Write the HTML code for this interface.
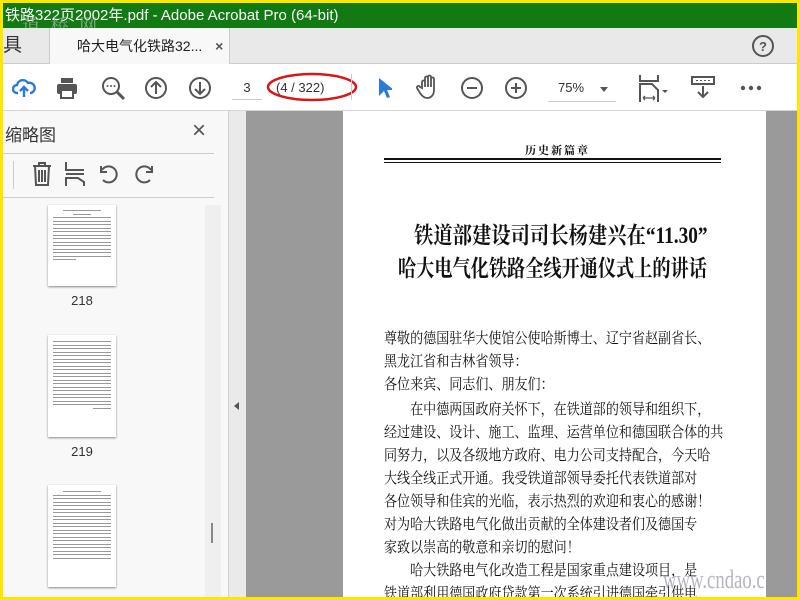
<!DOCTYPE html>
<html><head><meta charset="utf-8"><style>
*{margin:0;padding:0;box-sizing:border-box}
body{width:800px;height:600px;overflow:hidden;background:#ffe600;position:relative;font-family:"Liberation Sans","Noto Sans CJK SC",sans-serif}
.a{position:absolute}
.title{left:3px;top:3px;width:794px;height:25px;background:#117a12;color:#fff;font-size:15px;line-height:25px;padding-left:2px}
.tabs{left:3px;top:28px;width:794px;height:36px;background:#e9e9e9;border-bottom:1px solid #ccc}
.tb{left:3px;top:64px;width:794px;height:47px;background:#fff;border-bottom:1px solid #d5d5d5}
.panel{left:3px;top:111px;width:225px;height:486px;background:#f8f8f8}
.strip{left:228px;top:111px;width:18px;height:486px;background:#eaeaea;border-left:1px solid #d0d0d0}
.gray{left:246px;top:111px;width:551px;height:486px;background:#9a9a9a}
.page{left:343px;top:111px;width:423px;height:486px;background:#fff;font-family:"Liberation Serif","Noto Serif CJK SC",serif;color:#111;overflow:hidden}
.ic{stroke:#555;fill:none;stroke-width:2}
.body{transform:scaleX(0.87);transform-origin:0 0}
.body p{font-size:15px;line-height:23px;white-space:nowrap}
.thumb{background:#fff;box-shadow:0 1px 2px #888;width:68px}
.thumb i{display:block;height:1px;background:#999;margin:2.5px 5px}
</style></head><body>
<div class="a title">铁路322页2002年.pdf - Adobe Acrobat Pro (64-bit)</div>
<div class="a" style="left:22px;top:12px;color:#9fb7a0;font-size:18px;letter-spacing:3px;opacity:.8;font-family:'Noto Serif CJK SC',serif">道 桥 网</div>
<div class="a tabs">
 <div class="a" style="left:0;top:0;width:45px;height:36px;font-size:19px;line-height:36px;color:#333">具</div>
 <div class="a" style="left:46px;top:0;width:181px;height:36px;background:#f8f8f8;border-left:1px solid #ccc;border-right:1px solid #ccc;font-size:14px;line-height:36px;padding-left:27px;color:#222">哈大电气化铁路32... <span style="margin-left:9px;font-weight:bold;color:#555">×</span></div>
 <svg class="a" style="left:748px;top:6px" width="24" height="24"><circle cx="12" cy="12" r="10" class="ic"/><text x="12" y="17" text-anchor="middle" font-size="13" font-weight="bold" fill="#555" font-family="Liberation Sans">?</text></svg>
</div>
<div class="a tb">
 <svg class="a" style="left:9px;top:12px" width="24" height="24"><path d="M6 17h-1a4 4 0 0 1 0-8a6 6 0 0 1 11-2a5 5 0 0 1 3 10h-1M12 21v-9M8 15l4-4 4 4" stroke="#2a7ad8" stroke-width="2.4" fill="none"/></svg>
 <svg class="a" style="left:52px;top:12px" width="24" height="24"><rect x="6" y="2" width="12" height="5" fill="#555"/><rect x="2" y="8" width="20" height="10" rx="2" fill="#555"/><rect x="6" y="14" width="12" height="8" fill="#fff" stroke="#555" stroke-width="2"/></svg>
 <svg class="a" style="left:98px;top:12px" width="26" height="26"><circle cx="10" cy="10" r="8" class="ic"/><path d="M16 16l7 7" stroke="#555" stroke-width="3"/><circle cx="6.5" cy="10" r="1" fill="#555"/><circle cx="10" cy="10" r="1" fill="#555"/><circle cx="13.5" cy="10" r="1" fill="#555"/></svg>
 <svg class="a" style="left:141px;top:12px" width="24" height="24"><circle cx="12" cy="12" r="10" class="ic"/><path d="M12 18V7M7 11l5-5 5 5" class="ic"/></svg>
 <svg class="a" style="left:185px;top:12px" width="24" height="24"><circle cx="12" cy="12" r="10" class="ic"/><path d="M12 6v11M7 13l5 5 5-5" class="ic"/></svg>
 <div class="a" style="left:229px;top:16px;width:30px;height:20px;border-bottom:1px solid #ccc;text-align:center;font-size:13px;color:#333">3</div>
 <div class="a" style="left:273px;top:16px;font-size:13px;color:#333">(4 / 322)</div>
 <svg class="a" style="left:262px;top:6px" width="96" height="34"><ellipse cx="47" cy="17" rx="44" ry="13" fill="none" stroke="#d81818" stroke-width="2.5"/></svg>
 <div class="a" style="left:348px;top:10px;width:1px;height:26px;background:#ccc"></div>
 <svg class="a" style="left:373px;top:12px" width="16" height="24"><path d="M3 2v18l5-5 3 7 3-1-3-7h7z" fill="#2a7ad8"/></svg>
 <svg class="a" style="left:413px;top:10px" width="26" height="28"><path d="M6 14V8a1.5 1.5 0 0 1 3 0v5V4a1.5 1.5 0 0 1 3 0v9V3a1.5 1.5 0 0 1 3 0v10V5a1.5 1.5 0 0 1 3 0v11c0 5-3 8-7 8c-3 0-5-2-7-5l-3-5a1.5 1.5 0 0 1 3-1z" stroke="#555" stroke-width="1.8" fill="none"/></svg>
 <svg class="a" style="left:457px;top:12px" width="24" height="24"><circle cx="12" cy="12" r="10" class="ic"/><path d="M7 12h10" class="ic"/></svg>
 <svg class="a" style="left:501px;top:12px" width="24" height="24"><circle cx="12" cy="12" r="10" class="ic"/><path d="M7 12h10M12 7v10" class="ic"/></svg>
 <div class="a" style="left:545px;top:16px;width:68px;height:22px;border-bottom:1px solid #ccc;font-size:13px;color:#333;padding-left:10px">75%</div>
 <div class="a" style="left:597px;top:23px;border:4px solid transparent;border-top:5px solid #555"></div>
 <svg class="a" style="left:635px;top:10px" width="34" height="30"><path d="M2 1v6h18V1" class="ic"/><path d="M2 28V10h12l6 6v12" class="ic"/><path d="M5 24h12M5 24l2-2M5 24l2 2M17 24l-2-2M17 24l-2 2" stroke="#555" stroke-width="1.3" fill="none"/><path d="M24 16l3 3 3-3z" fill="#555"/></svg>
 <svg class="a" style="left:688px;top:11px" width="24" height="26"><rect x="1" y="2" width="22" height="7" class="ic"/><path d="M5 5.5h2M9 5.5h2M13 5.5h2M17 5.5h2" stroke="#555"/><path d="M12 11v11M7 17l5 5 5-5" class="ic"/></svg>
 <svg class="a" style="left:736px;top:20px" width="24" height="8"><circle cx="4" cy="4" r="2.2" fill="#555"/><circle cx="12" cy="4" r="2.2" fill="#555"/><circle cx="20" cy="4" r="2.2" fill="#555"/></svg>
</div>
<div class="a panel">
 <div class="a" style="left:2px;top:10px;font-size:17px;color:#333">缩略图</div>
 <div class="a" style="left:189px;top:6px;font-size:24px;color:#555">×</div>
 <div class="a" style="left:0;top:42px;width:211px;height:1px;background:#ccc"></div>
 <div class="a" style="left:10px;top:50px;width:1px;height:28px;background:#ccc"></div>
 <svg class="a" style="left:28px;top:50px" width="22" height="26"><path d="M2 5h18M8 5V2h6v3M4 5l1 19h12l1-19M8 9v12M11 9v12M14 9v12" class="ic"/></svg>
 <svg class="a" style="left:61px;top:50px" width="22" height="26"><path d="M2 1v8h18M2 25v-8h12l6 4v4M2 13h18" stroke="#555" stroke-width="2" fill="none"/></svg>
 <svg class="a" style="left:94px;top:51px" width="24" height="24"><path d="M6 18a8 8 0 1 0 -1-10M4 4v6h6" class="ic" stroke-width="2.5"/></svg>
 <svg class="a" style="left:129px;top:51px" width="24" height="24"><path d="M18 18a8 8 0 1 1 1-10M20 4v6h-6" class="ic" stroke-width="2.5"/></svg>
 <div class="a" style="left:0;top:86px;width:211px;height:1px;background:#ccc"></div>
 <div class="a" style="left:202px;top:94px;width:16px;height:392px;background:#efefef"></div>
 <div class="a" style="left:208px;top:412px;width:2px;height:20px;background:#888"></div>
 <div class="a thumb" style="left:45px;top:94px;height:81px"><i style="margin-top:5px;margin-left:15px;margin-right:15px"></i><i style="margin-left:25px;margin-right:25px"></i><i></i><i></i><i></i><i></i><i></i><i></i><i></i><i></i><i></i><i></i><i></i><i></i><i style="margin-right:40px"></i></div>
 <div class="a" style="left:45px;top:182px;width:68px;text-align:center;font-size:13px;color:#333">218</div>
 <div class="a thumb" style="left:45px;top:224px;height:102px"><i style="margin-top:6px"></i><i></i><i></i><i></i><i></i><i></i><i></i><i></i><i></i><i></i><i></i><i></i><i></i><i></i><i></i><i></i><i></i><i></i><i></i><i style="margin-left:45px"></i></div>
 <div class="a" style="left:45px;top:333px;width:68px;text-align:center;font-size:13px;color:#333">219</div>
 <div class="a thumb" style="left:45px;top:374px;height:102px"><i style="margin-top:6px;margin-left:15px;margin-right:15px"></i><i></i><i></i><i></i><i></i><i></i><i></i><i></i><i></i><i></i><i></i><i></i><i></i><i></i><i></i><i></i><i></i><i></i><i></i><i></i></div>
</div>
<div class="a strip"><div class="a" style="left:5px;top:291px;border:4px solid transparent;border-right:5px solid #555;border-left:0"></div></div>
<div class="a gray"></div>
<div class="a page">
 <div class="a" style="left:182px;top:31px;font-size:11px;font-weight:bold;letter-spacing:2px">历史新篇章</div>
 <div class="a" style="left:41px;top:47px;width:337px;height:2px;background:#111"></div>
 <div class="a" style="left:41px;top:51px;width:337px;height:1px;background:#111"></div>
 <div class="a" style="left:71px;top:109px;font-size:23px;line-height:32px;white-space:nowrap;font-weight:bold;transform:scaleX(0.84);transform-origin:0 0">铁道部建设司司长杨建兴在“11.30”</div>
 <div class="a" style="left:55px;top:142px;font-size:23px;line-height:32px;white-space:nowrap;font-weight:bold;transform:scaleX(0.79);transform-origin:0 0">哈大电气化铁路全线开通仪式上的讲话</div>
 <div class="a body" style="left:41px;top:217px">
  <p>尊敬的德国驻华大使馆公使哈斯博士、辽宁省赵副省长、</p>
  <p>黑龙江省和吉林省领导：</p>
  <p>各位来宾、同志们、朋友们：</p>
  <p style="margin-top:2px">　　在中德两国政府关怀下，在铁道部的领导和组织下，</p>
  <p>经过建设、设计、施工、监理、运营单位和德国联合体的共</p>
  <p>同努力，以及各级地方政府、电力公司支持配合，今天哈</p>
  <p>大线全线正式开通。我受铁道部领导委托代表铁道部对</p>
  <p>各位领导和佳宾的光临，表示热烈的欢迎和衷心的感谢！</p>
  <p>对为哈大铁路电气化做出贡献的全体建设者们及德国专</p>
  <p>家致以崇高的敬意和亲切的慰问！</p>
  <p>　　哈大铁路电气化改造工程是国家重点建设项目，是</p>
  <p>铁道部利用德国政府贷款第一次系统引进德国牵引供电</p>
 </div>
</div>
<div class="a" style="left:663px;top:565px;font-size:26px;color:#a9a9b9;font-family:'Liberation Serif',serif;opacity:.85;transform:scaleX(0.72);transform-origin:0 0;white-space:nowrap">www.cndao.c</div>
</body></html>
